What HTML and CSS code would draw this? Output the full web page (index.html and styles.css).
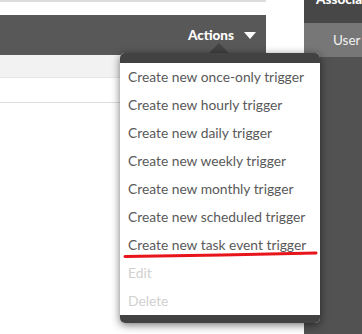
FILE: index.html
```html
<!DOCTYPE html>
<html lang="en">
<head>
    <meta charset="UTF-8">
    <meta name="viewport" content="width=device-width, initial-scale=1.0">
    <title>Triggers</title>

    <link rel="stylesheet" href="styles.css">
</head>
<body>
    <div class="main">
        <div class="top-line"></div>
        <div class="toolbar">
            <span class="actions">Actions</span>
            <span class="caret"></span>
        </div>
        <div class="subbar"></div>
        <div class="row"></div>
    </div>

    <div class="side">
        <div class="side-head"><span>Associated items</span></div>
        <div class="side-tab">User</div>
    </div>

    <!-- Actions drop-down menu -->
    <div class="menu-arrow"></div>
    <div class="menu">
        <div class="menu-top"></div>
        <div class="item">Create new once-only trigger</div>
        <div class="item">Create new hourly trigger</div>
        <div class="item">Create new daily trigger</div>
        <div class="item">Create new weekly trigger</div>
        <div class="item">Create new monthly trigger</div>
        <div class="item">Create new scheduled trigger</div>
        <div class="item">Create new task event trigger</div>
        <div class="item disabled">Edit</div>
        <div class="item disabled">Delete</div>
        <div class="menu-bottom"></div>
    </div>

    <svg class="marker" width="362" height="334" viewBox="0 0 362 334">
        <path d="M125 256.5 C 180 255.5, 260 254.5, 316 253" stroke="#e8141b" stroke-width="3" fill="none" stroke-linecap="round"/>
    </svg>
</body>
</html>
```

FILE: styles.css
```css
body {
    margin: 0;
    width: 362px;
    height: 334px;
    overflow: hidden;
    background: white;
    font-family: Lato, "Open Sans", sans-serif;
    display: flex;
    gap: 38px;
    position: relative;
}

.main {
    flex: none;
    width: 266px;
}

.top-line {
    height: 2px;
    background: #dcdcdc;
    margin-bottom: 13px;
}

.toolbar {
    height: 40px;
    background: #585858;
    display: flex;
    align-items: center;
    justify-content: flex-end;
    padding-right: 10px;
    color: white;
}

.actions {
    font-weight: 900;
    font-size: 13.5px;
    margin-right: 10px;
}

.caret {
    width: 0;
    height: 0;
    border-left: 6px solid transparent;
    border-right: 6px solid transparent;
    border-top: 7px solid white;
}

.subbar {
    height: 22px;
    background: #f2f2f2;
    border-bottom: 1px solid #e6e6e6;
}

.row {
    height: 24px;
    border-bottom: 1px solid #dcdcdc;
}

.side {
    flex: 1;
    min-width: 0;
    background: #525252;
}

.side-head {
    height: 23px;
    background: #474747;
    color: white;
    font-weight: 900;
    font-size: 13.5px;
    white-space: nowrap;
    overflow: hidden;
    padding-left: 12px;
}

.side-head span {
    display: block;
    margin-top: -9px;
}

.side-tab {
    height: 34px;
    background: #777777;
    color: #f2f2f2;
    font-size: 13.5px;
    line-height: 34px;
    padding-left: 29px;
    white-space: nowrap;
    overflow: hidden;
}

/* drop-down */
.menu {
    position: absolute;
    left: 120px;
    top: 53px;
    width: 200px;
    background: white;
    border-radius: 5px;
    box-shadow: 0 2px 8px rgba(0, 0, 0, 0.55);
    overflow: hidden;
}

.menu-arrow {
    position: absolute;
    left: 209px;
    top: 43px;
    width: 0;
    height: 0;
    border-left: 10px solid transparent;
    border-right: 10px solid transparent;
    border-bottom: 10px solid #424242;
}

.menu-top {
    height: 10px;
    background: #424242;
}

.menu-bottom {
    height: 8px;
    background: #424242;
}

.item {
    height: 28px;
    line-height: 28px;
    padding-left: 8px;
    font-size: 13.8px;
    color: #595959;
    white-space: nowrap;
}

.item.disabled {
    color: #d0d0d0;
}

.marker {
    position: absolute;
    left: 0;
    top: 0;
    pointer-events: none;
}
```
